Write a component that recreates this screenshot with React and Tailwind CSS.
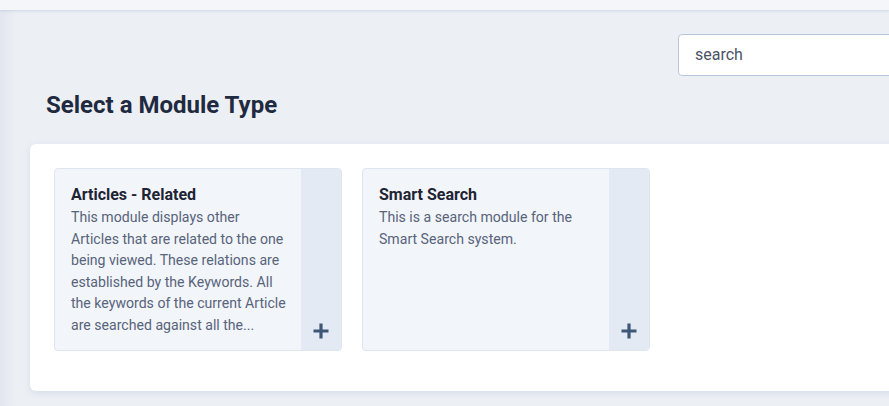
import React from "react";

function Plus() {
  return (
    <svg width="18" height="18" viewBox="0 0 18 18" className="block">
      <path d="M9 1.5v15M1.5 9h15" stroke="#3f5777" strokeWidth="3.2" />
    </svg>
  );
}

function Card({ title, text }) {
  return (
    <div className="flex w-[288px] h-[183px] rounded-[4px] border border-[#dfe5ee] bg-[#f2f5fa] overflow-hidden">
      <div className="flex-1 pl-[16px] pr-[15px] pt-[15px]">
        <div className="text-[16px] leading-[22px] font-bold text-[#1e2433]">{title}</div>
        <p className="text-[14.1px] leading-[21.6px] text-[#58647a] mt-[1px]">{text}</p>
      </div>
      <div className="w-[40px] bg-[#e3eaf4] flex items-end justify-center pb-[10px]">
        <Plus />
      </div>
    </div>
  );
}

export default function App() {
  return (
    <div
      className="w-[889px] h-[406px] overflow-hidden bg-[#ecf0f5] flex flex-col"
      style={{ fontFamily: "Roboto, 'Liberation Sans', sans-serif" }}
    >
      <div className="h-[10px] bg-[#f4f6fa] shadow-[0_1px_3px_rgba(150,165,195,0.35)] z-10 shrink-0" />
      <div className="flex flex-1">
        <div className="w-[16px] bg-gradient-to-r from-[#e1e6ef] to-[#ecf0f5] shrink-0" />
        <div className="flex flex-col flex-1 min-w-0">
          <div className="flex pt-[24px]">
            <div className="ml-[662px] w-[260px] h-[42px] shrink-0 rounded-[4px] border border-[#b9c7de] bg-white flex items-center pl-[16px] text-[16px] text-[#4b5366]">
              search
            </div>
          </div>
          <h1 className="ml-[30px] mt-[14px] text-[24px] leading-[30px] font-bold text-[#1f2a40]">
            Select a Module Type
          </h1>
          <div className="ml-[14px] mt-[24px] w-[900px] h-[247px] shrink-0 rounded-[6px] bg-white shadow-[0_2px_6px_rgba(150,165,195,0.25)] flex gap-[20px] pl-[24px] pt-[24px]">
            <Card
              title="Articles - Related"
              text="This module displays other Articles that are related to the one being viewed. These relations are established by the Keywords. All the keywords of the current Article are searched against all the..."
            />
            <Card
              title="Smart Search"
              text="This is a search module for the Smart Search system."
            />
          </div>
        </div>
      </div>
    </div>
  );
}
